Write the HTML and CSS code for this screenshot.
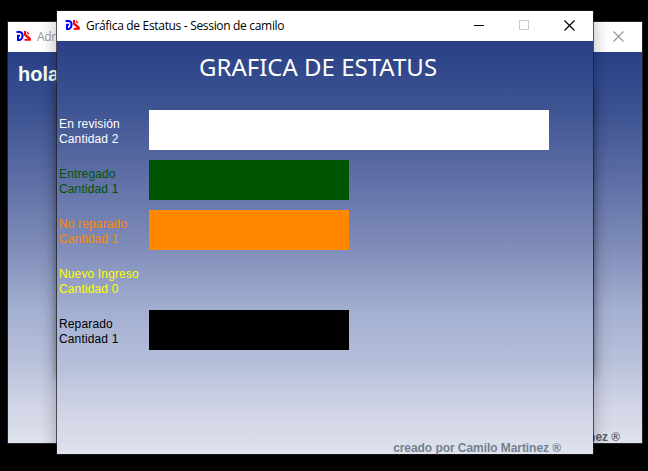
FILE: index.html
```html
<!DOCTYPE html>
<html lang="es">
<head>
<meta charset="utf-8">
<title>Gráfica de Estatus</title>
<link rel="stylesheet" href="styles.css">
</head>
<body>
<svg width="0" height="0" class="defs" aria-hidden="true">
  <symbol id="logo" viewBox="0 0 16 12">
    <path d="M.5 2H4Q6.6 2.4 6.6 5.5T4 9.9H2V5.8H4" fill="none" stroke="#00f" stroke-width="2"/>
    <path d="M8 1H10V4L14.8 8V10.8H8.5V9H12L8 5.2ZM11 1.2L13.5 3.8L12.3 4.6L10.8 3Z" fill="#f00"/>
  </symbol>
  <symbol id="close" viewBox="0 0 11 11">
    <path d="M.5 .5L10.5 10.5M10.5 .5L.5 10.5" fill="none" stroke="currentColor" stroke-width="1.2"/>
  </symbol>
</svg>
<main class="desktop">
  <section class="window window-back">
    <header class="titlebar">
      <svg class="logo"><use href="#logo"/></svg>
      <span class="caption">Adr</span>
      <svg class="close"><use href="#close"/></svg>
    </header>
    <div class="content">
      <h2 class="greeting">hola</h2>
      <footer class="credit">nez ®</footer>
    </div>
  </section>
  <section class="window window-front">
    <header class="titlebar">
      <svg class="logo"><use href="#logo"/></svg>
      <span class="caption">Gráfica de Estatus - Session de camilo</span>
      <span class="minimize"></span>
      <span class="maximize"></span>
      <svg class="close"><use href="#close"/></svg>
    </header>
    <div class="content">
      <h1 class="heading">GRAFICA DE ESTATUS</h1>
      <div class="chart">
        <div class="row review"><p class="label">En revisión<br>Cantidad 2</p><div class="bar full"></div></div>
        <div class="row delivered"><p class="label">Entregado<br>Cantidad 1</p><div class="bar"></div></div>
        <div class="row unrepaired"><p class="label">No reparado<br>Cantidad 1</p><div class="bar"></div></div>
        <div class="row incoming"><p class="label">Nuevo Ingreso<br>Cantidad 0</p></div>
        <div class="row repaired"><p class="label">Reparado<br>Cantidad 1</p><div class="bar"></div></div>
      </div>
      <footer class="credit">creado por Camilo Martinez ®</footer>
    </div>
  </section>
</main>
</body>
</html>
```
FILE: styles.css
```css
* { box-sizing: border-box; }
body { margin: 0; background: #000; font-family: "Liberation Sans", Arial, sans-serif; }
.defs { position: absolute; }
.desktop { position: relative; width: 648px; height: 471px; overflow: hidden; background: #000; }
.window { position: absolute; display: flex; flex-direction: column; outline: 1px solid #252529; }
.window-back { z-index: 1; left: 8px; top: 22px; width: 634px; height: 421px; overflow: hidden; overflow: clip; }
.window-front {
  z-index: 2; left: 57px; top: 11px; width: 536px; height: 443px;
  outline-color: rgba(30, 30, 36, .72);
}
.window-back::after {
  content: ""; position: absolute; left: 49px; top: -11px; width: 536px; height: 443px;
  box-shadow: 0 4px 16px 1px rgba(0, 0, 0, .28);
}
.window-back::before {
  content: ""; position: absolute; z-index: 1; left: 49px; top: 67px; width: 536px; height: 288px;
  box-shadow: 0 0 9px rgba(0, 0, 0, .38);
}
.titlebar { display: flex; align-items: center; height: 30px; flex: none; padding: 0 18px 0 8px; background: #fff; color: #000; }
.logo { width: 16px; height: 12px; margin: 0 5px 2px 0; }
.caption { flex: 1; font: 12px/30px "Open Sans", "Noto Sans", sans-serif; letter-spacing: -.32px; white-space: nowrap; }
.window-back .titlebar { color: #999; }
.close { width: 11px; height: 11px; margin-bottom: 2px; }
.minimize { width: 10px; height: 1px; margin: 0 35px 1px 0; background: #000; }
.maximize { width: 10px; height: 10px; margin: 0 35px 2px 0; border: 1px solid #ccc; }
.content {
  flex: 1; display: flex; flex-direction: column;
  background: linear-gradient(#294086 0%, #3c5291 15%, #5d6da5 32%, #808db9 50%, #a4b0d1 66%, #b6bfda 78%, #ced2e4 89%, #dfe3ee 100%);
}
.heading { margin: 10px 0 0 142px; height: 59px; font: 24px/32px "Noto Sans", sans-serif; color: #fff; white-space: nowrap; }
.greeting { margin: 10px 0 0 10px; font-size: 20px; line-height: 24px; color: #f4fff4; }
.chart { display: flex; flex-direction: column; gap: 10px; }
.row { display: flex; height: 40px; }
.label { width: 92px; margin: 0; padding: 7px 0 0 2px; font-size: 12px; line-height: 15px; white-space: nowrap; letter-spacing: .14px; }
.bar { width: 200px; background: currentColor; }
.full { width: 400px; }
.review { color: #fff; }
.delivered { color: #005500; }
.unrepaired { color: #ff8800; }
.incoming { color: #ffff00; }
.repaired { color: #000; }
.credit { margin: auto 32px -1px 0; height: 14px; text-align: right; font-size: 12px; font-weight: bold; line-height: 14px; letter-spacing: -.06px; color: #74818e; }
.window-back .credit { margin-right: 22px; color: #5e6268; }
```
